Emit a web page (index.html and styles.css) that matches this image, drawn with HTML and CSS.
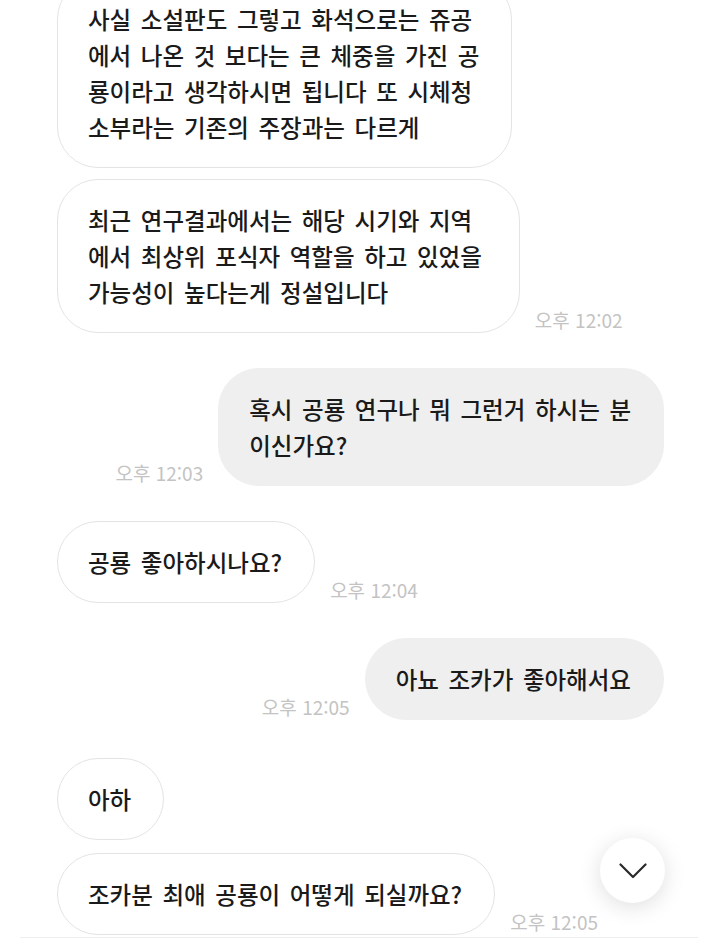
FILE: index.html
```html
<!DOCTYPE html>
<html lang="ko">
<head>
<meta charset="utf-8">
<link rel="stylesheet" href="styles.css">
</head>
<body>
<div class="chat">
  <div class="row recv first">
    <div class="bubble in">사실 소설판도 그렇고 화석으로는 쥬공<br>에서 나온 것 보다는 큰 체중을 가진 공<br>룡이라고 생각하시면 됩니다 또 시체청<br>소부라는 기존의 주장과는 다르게</div>
  </div>
  <div class="row recv gap-s">
    <div class="bubble in wide">최근 연구결과에서는 해당 시기와 지역<br>에서 최상위 포식자 역할을 하고 있었을<br>가능성이 높다는게 정설입니다</div>
    <span class="time">오후 12:02</span>
  </div>
  <div class="row sent gap-l">
    <span class="time">오후 12:03</span>
    <div class="bubble out">혹시 공룡 연구나 뭐 그런거 하시는 분<br>이신가요?</div>
  </div>
  <div class="row recv gap-l">
    <div class="bubble in">공룡 좋아하시나요?</div>
    <span class="time">오후 12:04</span>
  </div>
  <div class="row sent gap-l">
    <span class="time">오후 12:05</span>
    <div class="bubble out">아뇨 조카가 좋아해서요</div>
  </div>
  <div class="row recv gap-xl">
    <div class="bubble in">아하</div>
  </div>
  <div class="row recv gap-m">
    <div class="bubble in">조카분 최애 공룡이 어떻게 되실까요?</div>
    <span class="time">오후 12:05</span>
  </div>
  <div class="divider"></div>
</div>
<button class="scroll-down" aria-label="아래로 이동">
  <svg width="28" height="16" viewBox="0 0 28 16"><polyline points="1.5,1.5 14,14 26.5,1.5" fill="none" stroke="#2a2a2a" stroke-width="2.2" stroke-linecap="round" stroke-linejoin="round"/></svg>
</button>
</body>
</html>
```
FILE: styles.css
```css
html, body {
  margin: 0;
  padding: 0;
  background: #ffffff;
}
body {
  width: 718px;
  height: 952px;
  overflow: hidden;
  position: relative;
  font-family: "Noto Sans CJK KR", "Noto Sans", sans-serif;
  color: #1a1a1a;
}
.chat {
  display: flex;
  flex-direction: column;
  margin-top: -22px;
  padding: 0 54px 0 57px;
}
.row {
  display: flex;
  align-items: flex-end;
  gap: 15px;
}
.row.sent {
  justify-content: flex-end;
}
.row.gap-s {
  margin-top: 11px;
}
.row.gap-m {
  margin-top: 13px;
}
.row.gap-l {
  margin-top: 35px;
}
.row.gap-xl {
  margin-top: 38px;
}
.bubble {
  font-size: 23.5px;
  font-weight: 500;
  line-height: 36px;
  word-spacing: 3px;
  white-space: nowrap;
  padding: 22px 32px 22px 30px;
  border-radius: 41px;
  border: 1px solid #e4e4e4;
}
.bubble.wide {
  padding-right: 37px;
}
.bubble.in {
  background: #ffffff;
}
.bubble.out {
  background: #efefef;
  border-color: #efefef;
}
.time {
  font-size: 19px;
  line-height: 24px;
  color: #c3c3c3;
  white-space: nowrap;
  margin-bottom: 1px;
}
.divider {
  margin: 2px -34px 0 -37px;
  height: 1px;
  background: #eeeeee;
}
.scroll-down {
  position: absolute;
  left: 600px;
  top: 838px;
  width: 65px;
  height: 65px;
  border-radius: 50%;
  border: none;
  background: #ffffff;
  box-shadow: 0 4px 22px rgba(0, 0, 0, 0.13);
  display: flex;
  align-items: center;
  justify-content: center;
  padding: 0;
}
.scroll-down svg {
  display: block;
}
```
